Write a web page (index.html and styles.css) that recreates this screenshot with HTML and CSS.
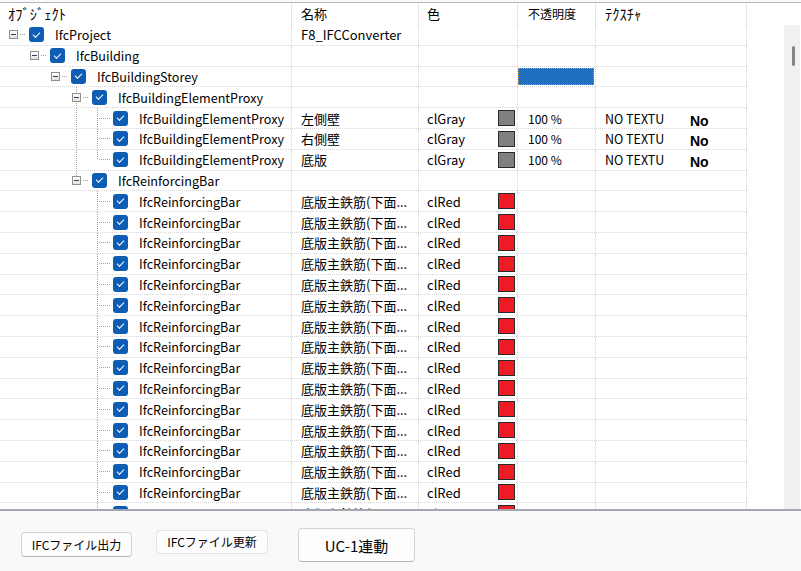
FILE: index.html
```html
<!DOCTYPE html>
<html lang="ja">
<head>
<meta charset="utf-8">
<title>IFC</title>
<link rel="stylesheet" href="styles.css">
</head>
<body>
<div class="window">
  <div class="grid">
    <div class="head">
      <div class="h c1 hw">ｵﾌﾞｼﾞｪｸﾄ</div>
      <div class="h c2">名称</div>
      <div class="h c3">色</div>
      <div class="h c4">不透明度</div>
      <div class="h c5 hw">ﾃｸｽﾁｬ</div>
    </div>
    <div class="body">
      <div class="rows">
        <div class="row">
          <div class="cell c1"><span class="conn box"><span class="btn"></span></span><span class="chk"></span><span class="label">IfcProject</span></div>
          <div class="cell c2">F8_IFCConverter</div><div class="cell c3"></div><div class="cell c4"></div><div class="cell c5"></div>
        </div>
        <div class="row">
          <div class="cell c1"><span class="slot"></span><span class="conn box"><span class="btn"></span></span><span class="chk"></span><span class="label">IfcBuilding</span></div>
          <div class="cell c2"></div><div class="cell c3"></div><div class="cell c4"></div><div class="cell c5"></div>
        </div>
        <div class="row">
          <div class="cell c1"><span class="slot"></span><span class="slot"></span><span class="conn box"><span class="btn"></span></span><span class="chk"></span><span class="label">IfcBuildingStorey</span></div>
          <div class="cell c2"></div><div class="cell c3"></div><div class="cell c4 sel"><span class="selbar"></span></div><div class="cell c5"></div>
        </div>
        <div class="row">
          <div class="cell c1"><span class="slot"></span><span class="slot"></span><span class="slot"></span><span class="conn box vdown"><span class="btn"></span></span><span class="chk"></span><span class="label">IfcBuildingElementProxy</span></div>
          <div class="cell c2"></div><div class="cell c3"></div><div class="cell c4"></div><div class="cell c5"></div>
        </div>
        <div class="row">
          <div class="cell c1"><span class="slot"></span><span class="slot"></span><span class="slot"></span><span class="slot v"></span><span class="conn tee"></span><span class="chk"></span><span class="label">IfcBuildingElementProxy</span></div>
          <div class="cell c2">左側壁</div><div class="cell c3"><span class="ctext">clGray</span><span class="sw gray"></span></div><div class="cell c4">100 %</div><div class="cell c5"><span class="tex">NO TEXTURE</span><b class="no">No</b></div>
        </div>
        <div class="row">
          <div class="cell c1"><span class="slot"></span><span class="slot"></span><span class="slot"></span><span class="slot v"></span><span class="conn tee"></span><span class="chk"></span><span class="label">IfcBuildingElementProxy</span></div>
          <div class="cell c2">右側壁</div><div class="cell c3"><span class="ctext">clGray</span><span class="sw gray"></span></div><div class="cell c4">100 %</div><div class="cell c5"><span class="tex">NO TEXTURE</span><b class="no">No</b></div>
        </div>
        <div class="row">
          <div class="cell c1"><span class="slot"></span><span class="slot"></span><span class="slot"></span><span class="slot v"></span><span class="conn ell"></span><span class="chk"></span><span class="label">IfcBuildingElementProxy</span></div>
          <div class="cell c2">底版</div><div class="cell c3"><span class="ctext">clGray</span><span class="sw gray"></span></div><div class="cell c4">100 %</div><div class="cell c5"><span class="tex">NO TEXTURE</span><b class="no">No</b></div>
        </div>
        <div class="row">
          <div class="cell c1"><span class="slot"></span><span class="slot"></span><span class="slot"></span><span class="conn box vup"><span class="btn"></span></span><span class="chk"></span><span class="label">IfcReinforcingBar</span></div>
          <div class="cell c2"></div><div class="cell c3"></div><div class="cell c4"></div><div class="cell c5"></div>
        </div>
        <div class="row">
          <div class="cell c1"><span class="slot"></span><span class="slot"></span><span class="slot"></span><span class="slot"></span><span class="conn tee"></span><span class="chk"></span><span class="label">IfcReinforcingBar</span></div>
          <div class="cell c2">底版主鉄筋(下面...</div><div class="cell c3"><span class="ctext">clRed</span><span class="sw red"></span></div><div class="cell c4"></div><div class="cell c5"></div>
        </div>
        <div class="row">
          <div class="cell c1"><span class="slot"></span><span class="slot"></span><span class="slot"></span><span class="slot"></span><span class="conn tee"></span><span class="chk"></span><span class="label">IfcReinforcingBar</span></div>
          <div class="cell c2">底版主鉄筋(下面...</div><div class="cell c3"><span class="ctext">clRed</span><span class="sw red"></span></div><div class="cell c4"></div><div class="cell c5"></div>
        </div>
        <div class="row">
          <div class="cell c1"><span class="slot"></span><span class="slot"></span><span class="slot"></span><span class="slot"></span><span class="conn tee"></span><span class="chk"></span><span class="label">IfcReinforcingBar</span></div>
          <div class="cell c2">底版主鉄筋(下面...</div><div class="cell c3"><span class="ctext">clRed</span><span class="sw red"></span></div><div class="cell c4"></div><div class="cell c5"></div>
        </div>
        <div class="row">
          <div class="cell c1"><span class="slot"></span><span class="slot"></span><span class="slot"></span><span class="slot"></span><span class="conn tee"></span><span class="chk"></span><span class="label">IfcReinforcingBar</span></div>
          <div class="cell c2">底版主鉄筋(下面...</div><div class="cell c3"><span class="ctext">clRed</span><span class="sw red"></span></div><div class="cell c4"></div><div class="cell c5"></div>
        </div>
        <div class="row">
          <div class="cell c1"><span class="slot"></span><span class="slot"></span><span class="slot"></span><span class="slot"></span><span class="conn tee"></span><span class="chk"></span><span class="label">IfcReinforcingBar</span></div>
          <div class="cell c2">底版主鉄筋(下面...</div><div class="cell c3"><span class="ctext">clRed</span><span class="sw red"></span></div><div class="cell c4"></div><div class="cell c5"></div>
        </div>
        <div class="row">
          <div class="cell c1"><span class="slot"></span><span class="slot"></span><span class="slot"></span><span class="slot"></span><span class="conn tee"></span><span class="chk"></span><span class="label">IfcReinforcingBar</span></div>
          <div class="cell c2">底版主鉄筋(下面...</div><div class="cell c3"><span class="ctext">clRed</span><span class="sw red"></span></div><div class="cell c4"></div><div class="cell c5"></div>
        </div>
        <div class="row">
          <div class="cell c1"><span class="slot"></span><span class="slot"></span><span class="slot"></span><span class="slot"></span><span class="conn tee"></span><span class="chk"></span><span class="label">IfcReinforcingBar</span></div>
          <div class="cell c2">底版主鉄筋(下面...</div><div class="cell c3"><span class="ctext">clRed</span><span class="sw red"></span></div><div class="cell c4"></div><div class="cell c5"></div>
        </div>
        <div class="row">
          <div class="cell c1"><span class="slot"></span><span class="slot"></span><span class="slot"></span><span class="slot"></span><span class="conn tee"></span><span class="chk"></span><span class="label">IfcReinforcingBar</span></div>
          <div class="cell c2">底版主鉄筋(下面...</div><div class="cell c3"><span class="ctext">clRed</span><span class="sw red"></span></div><div class="cell c4"></div><div class="cell c5"></div>
        </div>
        <div class="row">
          <div class="cell c1"><span class="slot"></span><span class="slot"></span><span class="slot"></span><span class="slot"></span><span class="conn tee"></span><span class="chk"></span><span class="label">IfcReinforcingBar</span></div>
          <div class="cell c2">底版主鉄筋(下面...</div><div class="cell c3"><span class="ctext">clRed</span><span class="sw red"></span></div><div class="cell c4"></div><div class="cell c5"></div>
        </div>
        <div class="row">
          <div class="cell c1"><span class="slot"></span><span class="slot"></span><span class="slot"></span><span class="slot"></span><span class="conn tee"></span><span class="chk"></span><span class="label">IfcReinforcingBar</span></div>
          <div class="cell c2">底版主鉄筋(下面...</div><div class="cell c3"><span class="ctext">clRed</span><span class="sw red"></span></div><div class="cell c4"></div><div class="cell c5"></div>
        </div>
        <div class="row">
          <div class="cell c1"><span class="slot"></span><span class="slot"></span><span class="slot"></span><span class="slot"></span><span class="conn tee"></span><span class="chk"></span><span class="label">IfcReinforcingBar</span></div>
          <div class="cell c2">底版主鉄筋(下面...</div><div class="cell c3"><span class="ctext">clRed</span><span class="sw red"></span></div><div class="cell c4"></div><div class="cell c5"></div>
        </div>
        <div class="row">
          <div class="cell c1"><span class="slot"></span><span class="slot"></span><span class="slot"></span><span class="slot"></span><span class="conn tee"></span><span class="chk"></span><span class="label">IfcReinforcingBar</span></div>
          <div class="cell c2">底版主鉄筋(下面...</div><div class="cell c3"><span class="ctext">clRed</span><span class="sw red"></span></div><div class="cell c4"></div><div class="cell c5"></div>
        </div>
        <div class="row">
          <div class="cell c1"><span class="slot"></span><span class="slot"></span><span class="slot"></span><span class="slot"></span><span class="conn tee"></span><span class="chk"></span><span class="label">IfcReinforcingBar</span></div>
          <div class="cell c2">底版主鉄筋(下面...</div><div class="cell c3"><span class="ctext">clRed</span><span class="sw red"></span></div><div class="cell c4"></div><div class="cell c5"></div>
        </div>
        <div class="row">
          <div class="cell c1"><span class="slot"></span><span class="slot"></span><span class="slot"></span><span class="slot"></span><span class="conn tee"></span><span class="chk"></span><span class="label">IfcReinforcingBar</span></div>
          <div class="cell c2">底版主鉄筋(下面...</div><div class="cell c3"><span class="ctext">clRed</span><span class="sw red"></span></div><div class="cell c4"></div><div class="cell c5"></div>
        </div>
        <div class="row">
          <div class="cell c1"><span class="slot"></span><span class="slot"></span><span class="slot"></span><span class="slot"></span><span class="conn tee"></span><span class="chk"></span><span class="label">IfcReinforcingBar</span></div>
          <div class="cell c2">底版主鉄筋(下面...</div><div class="cell c3"><span class="ctext">clRed</span><span class="sw red"></span></div><div class="cell c4"></div><div class="cell c5"></div>
        </div>
        <div class="row">
          <div class="cell c1"><span class="slot"></span><span class="slot"></span><span class="slot"></span><span class="slot"></span><span class="conn tee"></span><span class="chk"></span><span class="label">IfcReinforcingBar</span></div>
          <div class="cell c2">底版主鉄筋(下面...</div><div class="cell c3"><span class="ctext">clRed</span><span class="sw red"></span></div><div class="cell c4"></div><div class="cell c5"></div>
        </div>
      </div>
      <div class="vscroll"><div class="thumb"></div></div>
    </div>
  </div>
  <div class="buttons">
    <button class="btn1">IFCファイル出力</button>
    <button class="btn2">IFCファイル更新</button>
    <button class="btn3">UC-1連動</button>
  </div>
</div>
</body>
</html>
```

FILE: styles.css
```css
html, body {
  margin: 0;
  padding: 0;
  background: #f9f9f9;
}
body {
  font-family: "Noto Sans CJK JP", "Noto Sans", sans-serif;
  color: #000;
}
.window {
  width: 801px;
  height: 571px;
  display: flex;
  flex-direction: column;
  overflow: hidden;
}
.grid {
  margin-top: 2px;
  border-top: 1px solid #b6b6c2;
  border-bottom: 2px solid #a6a6b0;
  background: #fff;
  display: flex;
  flex-direction: column;
}
.head {
  display: flex;
  height: 22px;
}
.h {
  box-sizing: border-box;
  height: 22px;
  border-right: 1px solid #e6e6e6;
  font-size: 13px;
  line-height: 22px;
  padding-left: 7px;
  white-space: nowrap;
  overflow: hidden;
}
.h.hw { font-size: 14.5px; }
.h.c1 { padding-left: 8px; }
.c1 { width: 292px; flex: none; }
.c2 { width: 127px; flex: none; }
.c3 { width: 99px; flex: none; }
.c4 { width: 78px; flex: none; }
.c5 { width: 151px; flex: none; }

.body {
  display: flex;
  height: 484px;
}
.rows {
  flex: 1;
  overflow: hidden;
}
.vscroll {
  width: 16px;
  margin-right: 1px;
  background: #f0f0f0;
  flex: none;
}
.thumb {
  width: 3px;
  height: 20px;
  margin: 21px 0 0 8px;
  border-radius: 2px;
  background: #858585;
}

.row {
  display: flex;
  width: 747px;
  height: 20.8px;
  box-sizing: border-box;
  border-bottom: 1px dotted #d6d6d6;
  font-size: 12.6px;
}
.cell {
  box-sizing: border-box;
  height: 100%;
  border-right: 1px dotted #d6d6d6;
  display: flex;
  align-items: center;
  white-space: nowrap;
  overflow: hidden;
}
.c1 { padding-left: 3px; }
.c2 { padding-left: 9px; font-size: 13px; }
.c3 { padding-left: 8px; padding-right: 2px; font-size: 13px; }
.c4 { padding-left: 10px; font-size: 12px; }
.c5 { padding-left: 9px; font-size: 12.5px; }

.slot {
  width: 21px;
  height: 100%;
  flex: none;
}
.slot.v {
  background: repeating-linear-gradient(to bottom, #a0a0a0 0 1px, transparent 1px 2px) 10px 0 / 1px 100% no-repeat;
}
.conn {
  width: 23px;
  height: 100%;
  flex: none;
  display: flex;
  align-items: center;
}
.conn.tee {
  background:
    repeating-linear-gradient(to bottom, #a0a0a0 0 1px, transparent 1px 2px) 10px 0 / 1px 100% no-repeat,
    repeating-linear-gradient(to right, #a0a0a0 0 1px, transparent 1px 2px) 12px 50% / 11px 1px no-repeat;
}
.conn.ell {
  background:
    repeating-linear-gradient(to bottom, #a0a0a0 0 1px, transparent 1px 2px) 10px 0 / 1px 50% no-repeat,
    repeating-linear-gradient(to right, #a0a0a0 0 1px, transparent 1px 2px) 12px 50% / 11px 1px no-repeat;
}
.conn.box {
  background:
    repeating-linear-gradient(to right, #a0a0a0 0 1px, transparent 1px 2px) 17px 50% / 6px 1px no-repeat;
}
.conn.box.vdown {
  background:
    repeating-linear-gradient(to right, #a0a0a0 0 1px, transparent 1px 2px) 17px 50% / 6px 1px no-repeat,
    repeating-linear-gradient(to bottom, #a0a0a0 0 1px, transparent 1px 2px) 10px 0 / 1px 100% no-repeat;
}
.conn.box.vup {
  background:
    repeating-linear-gradient(to right, #a0a0a0 0 1px, transparent 1px 2px) 17px 50% / 6px 1px no-repeat,
    repeating-linear-gradient(to bottom, #a0a0a0 0 1px, transparent 1px 2px) 10px 0 / 1px 50% no-repeat;
}
.btn {
  width: 9px;
  height: 9px;
  box-sizing: border-box;
  margin-left: 6px;
  border: 1px solid #8e8f8f;
  background: linear-gradient(#ffffff, #e2e2e2);
  display: flex;
  align-items: center;
  justify-content: center;
}
.btn::after {
  content: "";
  width: 5px;
  height: 1px;
  background: #2b3e63;
}
.chk {
  width: 15px;
  height: 15px;
  margin-left: 3px;
  border-radius: 3px;
  background: #0e5db5;
  flex: none;
  display: flex;
  align-items: center;
  justify-content: center;
}
.chk::after {
  content: "";
  width: 6px;
  height: 3px;
  border-left: 1.2px solid #fff;
  border-bottom: 1.2px solid #fff;
  transform: translate(0, -1px) rotate(-45deg);
}
.label {
  margin-left: 11px;
}
.ctext { flex: 1; }
.sw {
  width: 17px;
  height: 16px;
  box-sizing: border-box;
  border: 1px solid #2a2a2a;
  flex: none;
}
.sw.gray { background: #808080; }
.sw.red { background: #ed1c24; }
.sel { padding: 1px 1px 1px 0; }
.selbar {
  display: block;
  width: 100%;
  height: 100%;
  box-sizing: border-box;
  background: #1f6fbf;
  border: 1px dotted #e38a2a;
}
.tex {
  width: 60px;
  overflow: hidden;
  flex: none;
}
.no {
  margin-left: 25px;
  padding-top: 5px;
  font-family: "Liberation Sans", Arial, sans-serif;
  font-weight: bold;
  font-size: 14px;
}

.buttons {
  flex: 1;
  display: flex;
  align-items: flex-start;
  padding-left: 21px;
  background: #f9f9f9;
}
.buttons button {
  font-family: "Noto Sans CJK JP", sans-serif;
  color: #000;
  background: #fdfdfd;
  border: 1px solid #d3d3d3;
  border-bottom-color: #b5b5b5;
  border-radius: 4px;
  padding: 0;
  font-size: 12px;
  line-height: 1;
}
.btn1 {
  margin-top: 21px;
  width: 111px;
  height: 25px;
}
.btn2 {
  margin-top: 19px;
  margin-left: 24px;
  width: 112px;
  height: 24px;
  border-color: #e3e3e3 !important;
}
.btn3 {
  margin-top: 17px;
  margin-left: 30px;
  width: 117px;
  height: 34px;
  font-size: 15px !important;
  color: #1b1b1b;
}
```
